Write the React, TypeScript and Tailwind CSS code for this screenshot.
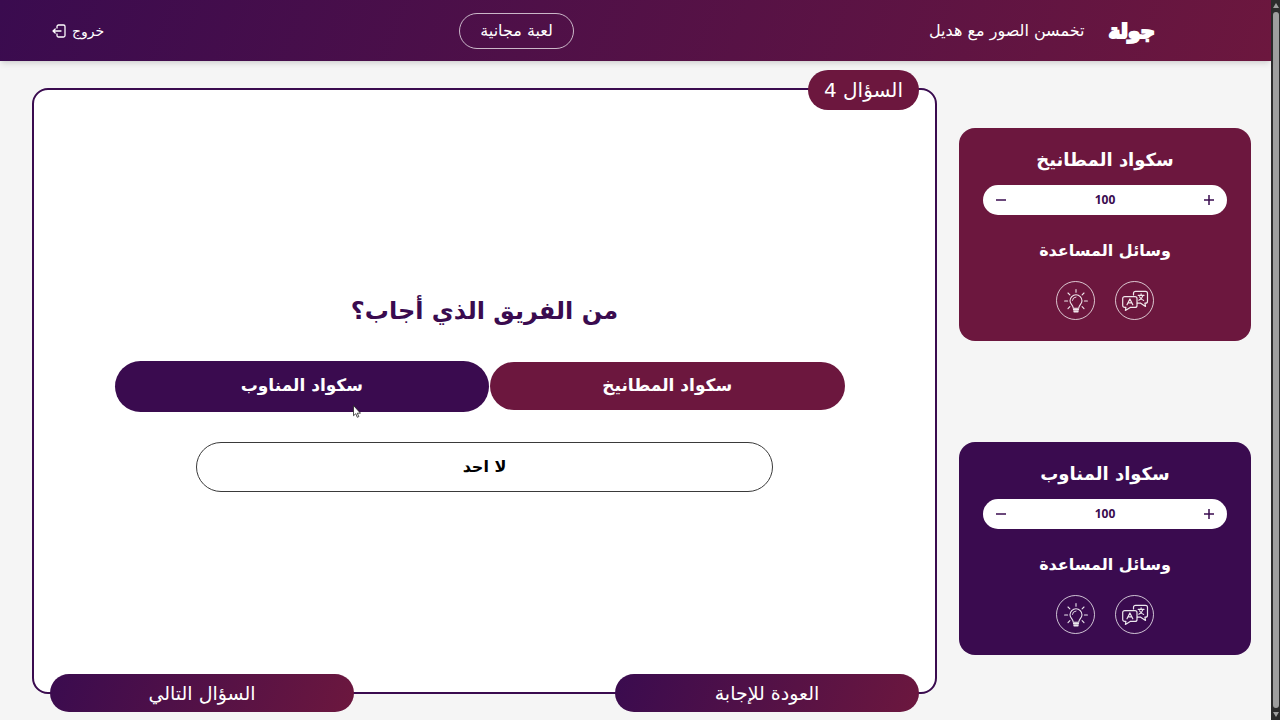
const Bulb = () => (
  <svg viewBox="0 0 24 24" className="h-6 w-6" fill="none" stroke="currentColor" strokeWidth="1.100" strokeLinecap="round" strokeLinejoin="round">
    <path d="M12 5.800a6 6 0 0 0-6 6c0 3.300 3.200 4.300 3.300 7.400h5.400c.1-3.100 3.300-4.100 3.300-7.400a6 6 0 0 0-6-6z" />
    <path d="M12 8a3.700 3.700 0 0 0-3.600 3.400" strokeWidth=".9" />
    <path d="M9.800 20.700h4.400M10.200 22.600h3.600" strokeWidth="1.800" />
    <path d="M12 .6v2.600M.6 12h3M20.400 12h3M4 4l1.900 1.900M20 4l-1.900 1.900M4 19.600l1.900-1.900M20 19.600l-1.900-1.900" />
  </svg>
);

const Translate = () => (
  <svg viewBox="0 0 28 24" className="h-6 w-7" fill="none" stroke="currentColor" strokeWidth="1.200" strokeLinecap="round" strokeLinejoin="round">
    <path d="M12.500 6V4.400a2 2 0 0 1 2-2H24.500a2 2 0 0 1 2 2v7.800a2 2 0 0 1-2 2h-.6l.6 3.200-4.800-3.200h-3.300" />
    <path d="M3.700 7.600h10.300a2 2 0 0 1 2 2v6.800a2 2 0 0 1-2 2H9.200L4.400 21.400l.5-3H3.700a2 2 0 0 1-2-2V9.600a2 2 0 0 1 2-2z" />
    <path d="M6 15.800l2.900-5.800 2.900 5.800M7.200 13.900h3.400" />
    <path d="M17.200 6.400h5.800M20.100 4.800v1.600M22 6.400c-.6 2.400-2 3.900-4.200 4.900M18.500 7.800c.8 1.700 2.200 2.900 4.200 3.600" strokeWidth="1.100" />
  </svg>
);

type TeamProps = { name: string; score: number; tone: string };

function TeamCard({ name, score, tone }: TeamProps) {
  return (
    <section className={`flex flex-col items-center rounded-2xl px-6 pt-4 pb-[21px] text-white ${tone}`}>
      <h2 className="text-lg leading-8 font-bold">{name}</h2>
      <div className="mt-[9px] flex h-[30px] w-full items-center justify-between rounded-full bg-white px-3 text-[#3a0b4f]">
        <button type="button" aria-label="زيادة" className="flex h-5 w-3 items-center justify-center">
          <svg viewBox="0 0 12 12" className="h-3 w-3" stroke="currentColor" strokeWidth="1.500"><path d="M6 1v10M1 6h10" /></svg>
        </button>
        <output className="font-['Open_Sans',sans-serif] text-xs font-bold">{score}</output>
        <button type="button" aria-label="إنقاص" className="flex h-5 w-3 items-center justify-center">
          <svg viewBox="0 0 12 12" className="h-3 w-3" stroke="currentColor" strokeWidth="1.500"><path d="M1 6h10" /></svg>
        </button>
      </div>
      <h3 className="mt-5 text-base leading-8 font-bold">وسائل المساعدة</h3>
      <div className="mt-[14px] flex gap-5">
        <button type="button" aria-label="ترجمة" className="flex h-[39px] w-[39px] items-center justify-center rounded-full border border-white/75 text-white/90"><Translate /></button>
        <button type="button" aria-label="تلميح" className="flex h-[39px] w-[39px] items-center justify-center rounded-full border border-white/75 text-white/90"><Bulb /></button>
      </div>
    </section>
  );
}

export default function App() {
  return (
    <div dir="rtl" className="flex min-h-screen bg-[#f5f5f5] font-['DejaVu_Sans',sans-serif]">
      <div aria-hidden="true" className="flex w-[9px] shrink-0 flex-col items-center justify-between bg-[#2c2c2c] py-[3px]">
        <svg viewBox="0 0 6 5" className="h-[5px] w-[6px] fill-[#a0a0a0]"><path d="M3 0l3 5H0z" /></svg>
        <div className="my-1 w-[6px] flex-1 rounded-full bg-[#9f9f9f]" />
        <svg viewBox="0 0 6 5" className="h-[5px] w-[6px] fill-[#a0a0a0]"><path d="M3 5l3-5H0z" /></svg>
      </div>
      <div className="flex min-w-0 flex-1 flex-col">
        <header className="flex h-[61px] items-center justify-between bg-[linear-gradient(110deg,#3a0b4f,#6c173e)] ps-[116px] pe-[52px] text-white shadow-md">
          <div className="flex items-center gap-6">
            <a href="#" className="text-xl leading-8 font-bold [-webkit-text-stroke:2px_white]">جولة</a>
            <span className="text-base">تخمسن الصور مع هديل</span>
          </div>
          <button type="button" className="h-9 rounded-full border border-white/70 px-5 text-base">لعبة مجانية</button>
          <button type="button" className="flex items-center gap-[6px] text-sm">
            خروج
            <svg viewBox="0 0 14 14" className="h-[14px] w-[14px]" fill="none" stroke="currentColor" strokeWidth="1.300" strokeLinecap="round" strokeLinejoin="round">
              <path d="M5 4V2.500A1.500 1.500 0 0 1 6.500 1h5A1.500 1.500 0 0 1 13 2.500v9a1.500 1.500 0 0 1-1.500 1.500h-5A1.500 1.500 0 0 1 5 11.500V10M9 7H1M3.200 5L1 7l2.200 2" />
            </svg>
          </button>
        </header>
        <div className="flex flex-1 gap-[22px] ps-5 pe-8 pt-[27px] pb-[26px]">
          <aside className="flex w-[292px] shrink-0 flex-col gap-[101px] pt-10">
            <TeamCard name="سكواد المطانيخ" score={100} tone="bg-[#6c173e]" />
            <TeamCard name="سكواد المناوب" score={100} tone="bg-[#3a0b4f]" />
          </aside>
          <main className="relative flex flex-1 flex-col items-center justify-center rounded-2xl border-2 border-[#3a0b4f] bg-white">
            <div className="absolute -top-5 right-4 flex h-10 items-center rounded-full bg-[#6c173e] px-4 text-xl text-white">السؤال 4</div>
            <h1 className="text-2xl leading-10 font-bold text-[#3a0b4f]">من الفريق الذي أجاب؟</h1>
            <div className="mt-[30px] grid w-4/5 grid-cols-2 items-center gap-[10px] text-[17px] font-bold text-white">
              <button type="button" className="h-12 rounded-full bg-[#6c173e]">سكواد المطانيخ</button>
              <button type="button" className="-mx-[9px] h-[51px] rounded-full bg-[#3a0b4f]">سكواد المناوب</button>
            </div>
            <button type="button" className="mt-[30px] h-[50px] w-[64%] rounded-full border border-[#3a3a3a] text-base font-bold text-black">لا احد</button>
            <div className="absolute inset-x-4 -bottom-5 flex justify-between text-[19px] text-white">
              <button type="button" className="h-[38px] w-[304px] rounded-full bg-[linear-gradient(110deg,#3a0b4f,#6c173e)]">العودة للإجابة</button>
              <button type="button" className="h-[38px] w-[304px] rounded-full bg-[linear-gradient(110deg,#3a0b4f,#6c173e)]">السؤال التالي</button>
            </div>
            <svg aria-hidden="true" viewBox="0 0 8 13" className="absolute top-[315px] left-[319px] h-[13px] w-2"><path d="M.5.5v10.200l2.300-2L4.300 12.300l1.500-.7L4.300 8.200h3.200z" fill="#fff" stroke="#222" strokeWidth=".8" /></svg>
          </main>
        </div>
      </div>
    </div>
  );
}
